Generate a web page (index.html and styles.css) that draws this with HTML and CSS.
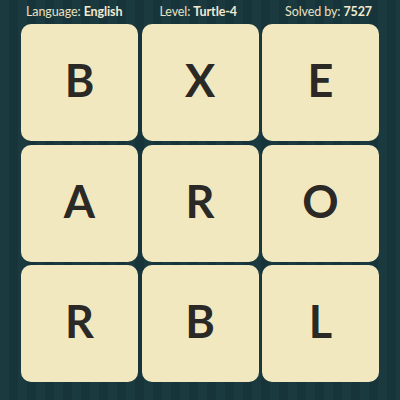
FILE: index.html
```html
<!DOCTYPE html>
<html>
<head>
<meta charset="utf-8">
<link rel="stylesheet" href="styles.css">
</head>
<body>
<div class="page">
  <div class="header">
    <span class="stat stat-lang">Language: <b>English</b></span>
    <span class="stat stat-level">Level: <b>Turtle-4</b></span>
    <span class="stat stat-solved">Solved by: <b>7527</b></span>
  </div>
  <div class="board">
    <div class="tile">B</div>
    <div class="tile">X</div>
    <div class="tile">E</div>
    <div class="tile">A</div>
    <div class="tile">R</div>
    <div class="tile">O</div>
    <div class="tile">R</div>
    <div class="tile">B</div>
    <div class="tile">L</div>
  </div>
</div>
</body>
</html>
```

FILE: styles.css
```css
html, body {
  margin: 0;
  padding: 0;
}
body {
  width: 400px;
  height: 400px;
  overflow: hidden;
  background-color: #19363c;
  background-image: repeating-linear-gradient(90deg, #1b3a40 0px, #1b3a40 9px, #17343b 9px, #17343b 18px);
  font-family: Lato, "Open Sans", sans-serif;
}
.page {
  display: flex;
  flex-direction: column;
}
.header {
  height: 23px;
  padding-bottom: 1px;
  display: flex;
  align-items: center;
  color: #e9e1c1;
  font-size: 12.5px;
  letter-spacing: -0.1px;
}
.stat b {
  font-weight: 700;
  color: #f1ead0;
}
.stat-lang { margin-left: 26px; }
.stat-level { margin-left: 37px; }
.stat-solved { margin-left: auto; margin-right: 28px; }
.board {
  margin-left: 21px;
  width: 358px;
  display: grid;
  grid-template-columns: repeat(3, 117px);
  grid-template-rows: repeat(3, 117px);
  gap: 3.5px;
}
.tile {
  background: #f1e8c0;
  border-radius: 10px;
  display: flex;
  align-items: center;
  justify-content: center;
  color: #2b2925;
  font-size: 45px;
  font-weight: 700;
  padding-bottom: 5px;
  box-sizing: border-box;
}
```
